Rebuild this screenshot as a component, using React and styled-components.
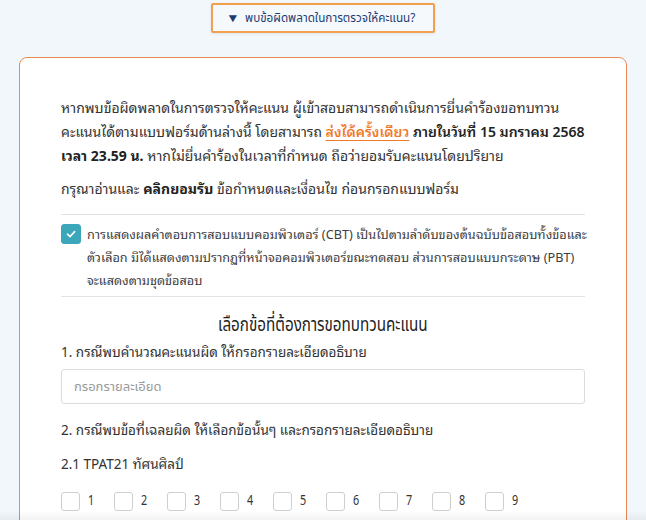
import styled, { createGlobalStyle } from "styled-components";

const GlobalStyle = createGlobalStyle`
  html, body {
    margin: 0;
    padding: 0;
    background: #f2f7fb;
  }
  body {
    font-family: "Noto Sans", "Noto Sans Thai Looped", "Noto Sans Thai", sans-serif;
    color: #333;
  }
`;

const Page = styled.div`
  display: flex;
  flex-direction: column;
  align-items: center;
  padding-top: 3px;
`;

const Toggle = styled.button`
  display: flex;
  align-items: center;
  gap: 6px;
  box-sizing: border-box;
  width: 224px;
  height: 30px;
  padding: 0 0 0 14px;
  border: 2px solid #f2a04e;
  border-radius: 2px;
  background: #f6f9fc;
  color: #1d3d72;
  font-family: "Noto Sans Thai", "Noto Sans", sans-serif;
  font-size: 13px;
  cursor: pointer;
  overflow: hidden;
  white-space: nowrap;
  box-shadow: 0 1px 3px rgba(0, 0, 0, 0.08);
`;

const Arrow = styled.span`
  font-size: 12px;
  transform: scaleX(1.15);
`;

const Narrow = styled.span`
  display: inline-block;
  transform: scaleX(${(p) => p.$scale});
  transform-origin: ${(p) => p.$origin || "left"} center;
`;

const Card = styled.div`
  box-sizing: border-box;
  align-self: stretch;
  margin: 24px 19px 0;
  padding: 38px 41px 40px;
  background: #fff;
  border: 1.5px solid #e98a50;
  border-radius: 8px;
`;

const Para = styled.p`
  margin: 0;
  font-size: 14px;
  line-height: 24px;
  white-space: nowrap;
  & + & {
    margin-top: 9px;
  }
`;

const Strong = styled.b`
  font-weight: ${(p) => p.$weight || 700};
  color: #222;
`;

const Once = styled.span`
  color: #f07a2a;
  font-weight: 600;
  text-decoration: underline;
  text-underline-offset: 3px;
`;

const Consent = styled.label`
  display: flex;
  gap: 6px;
  align-items: flex-start;
  margin-top: 13px;
  padding: 8px 0 4px;
  border-top: 1px solid #e3e3e3;
  border-bottom: 1px solid #e3e3e3;
`;

const CheckBox = styled.span`
  flex: none;
  display: flex;
  align-items: center;
  justify-content: center;
  box-sizing: border-box;
  width: ${(p) => p.$size}px;
  height: ${(p) => p.$size}px;
  border-radius: 3px;
  background: ${(p) => (p.$checked ? "#3ca7ba" : "#fff")};
  border: 1px solid ${(p) => (p.$checked ? "#3ca7ba" : "#cfcfcf")};
  margin-top: ${(p) => p.$offset || 0}px;
`;

const ConsentText = styled.div`
  font-size: 12.7px;
  line-height: 23px;
  color: #3d3d3d;
  white-space: nowrap;
`;

const Heading = styled.h2`
  margin: 13px 0 0;
  text-align: center;
  font-family: "Noto Sans Thai", "Noto Sans", sans-serif;
  font-weight: 400;
  font-size: 20px;
  line-height: 30px;
  color: #222;
`;

const Label = styled.div`
  font-size: 13.5px;
  line-height: 24px;
  color: #333;
  margin-top: ${(p) => p.$top || 0}px;
`;

const Input = styled.input`
  display: block;
  box-sizing: border-box;
  width: 100%;
  height: 35px;
  margin-top: 5px;
  padding: 0 12px;
  border: 1px solid #dcdcdc;
  border-radius: 3px;
  font-family: "Noto Sans Thai", "Noto Sans", sans-serif;
  font-size: 13px;
  &::placeholder {
    color: #9a9a9a;
  }
`;

const Numbers = styled.div`
  display: flex;
  margin-top: 15px;
`;

const NumItem = styled.label`
  display: flex;
  align-items: center;
  gap: 8px;
  width: 53px;
  font-family: "Noto Sans Thai", "Noto Sans", sans-serif;
  font-size: 13.5px;
  color: #333;
`;

const BottomShade = styled.div`
  position: fixed;
  left: 0;
  right: 0;
  bottom: 0;
  height: 9px;
  background: linear-gradient(to bottom, rgba(0, 0, 0, 0), rgba(0, 0, 0, 0.05));
  pointer-events: none;
`;

function Tick() {
  return (
    <svg width="12" height="12" viewBox="0 0 12 12" fill="none">
      <path d="M2.5 6.2 L5 8.6 L9.6 3.6" stroke="#fff" strokeWidth="1.6" strokeLinecap="round" strokeLinejoin="round" />
    </svg>
  );
}

export default function App() {
  const nums = [1, 2, 3, 4, 5, 6, 7, 8, 9];
  return (
    <Page>
      <GlobalStyle />
      <Toggle>
        <Arrow>▼</Arrow>
        <Narrow $scale={0.9}>พบข้อผิดพลาดในการตรวจให้คะแนน?</Narrow>
      </Toggle>

      <Card>
        <Para>
          หากพบข้อผิดพลาดในการตรวจให้คะแนน ผู้เข้าสอบสามารถดำเนินการยื่นคำร้องขอทบทวน
          <br />
          คะแนนได้ตามแบบฟอร์มด้านล่างนี้ โดยสามารถ <Once>ส่งได้ครั้งเดียว</Once>{" "}
          <Strong $weight={600}>ภายในวันที่ 15 มกราคม 2568</Strong>
          <br />
          <Strong>เวลา 23.59 น.</Strong> หากไม่ยื่นคำร้องในเวลาที่กำหนด ถือว่ายอมรับคะแนนโดยปริยาย
        </Para>
        <Para>
          กรุณาอ่านและ <Strong>คลิกยอมรับ</Strong> ข้อกำหนดและเงื่อนไข ก่อนกรอกแบบฟอร์ม
        </Para>

        <Consent>
          <CheckBox $size={20} $checked $offset={1}>
            <Tick />
          </CheckBox>
          <ConsentText>
            การแสดงผลคำตอบการสอบแบบคอมพิวเตอร์ (CBT) เป็นไปตามลำดับของต้นฉบับข้อสอบทั้งข้อและ
            <br />
            ตัวเลือก มิได้แสดงตามปรากฏที่หน้าจอคอมพิวเตอร์ขณะทดสอบ ส่วนการสอบแบบกระดาษ (PBT)
            <br />
            จะแสดงตามชุดข้อสอบ
          </ConsentText>
        </Consent>

        <Heading>
          <Narrow $scale={0.76} $origin="center">เลือกข้อที่ต้องการขอทบทวนคะแนน</Narrow>
        </Heading>
        <Label>1. กรณีพบคำนวณคะแนนผิด ให้กรอกรายละเอียดอธิบาย</Label>
        <Input placeholder="กรอกรายละเอียด" />

        <Label $top={14}>2. กรณีพบข้อที่เฉลยผิด ให้เลือกข้อนั้นๆ และกรอกรายละเอียดอธิบาย</Label>
        <Label $top={10}>2.1 TPAT21 ทัศนศิลป์</Label>

        <Numbers>
          {nums.map((n) => (
            <NumItem key={n}>
              <CheckBox $size={19} />
              <Narrow $scale={0.8}>{n}</Narrow>
            </NumItem>
          ))}
        </Numbers>
      </Card>
      <BottomShade />
    </Page>
  );
}
